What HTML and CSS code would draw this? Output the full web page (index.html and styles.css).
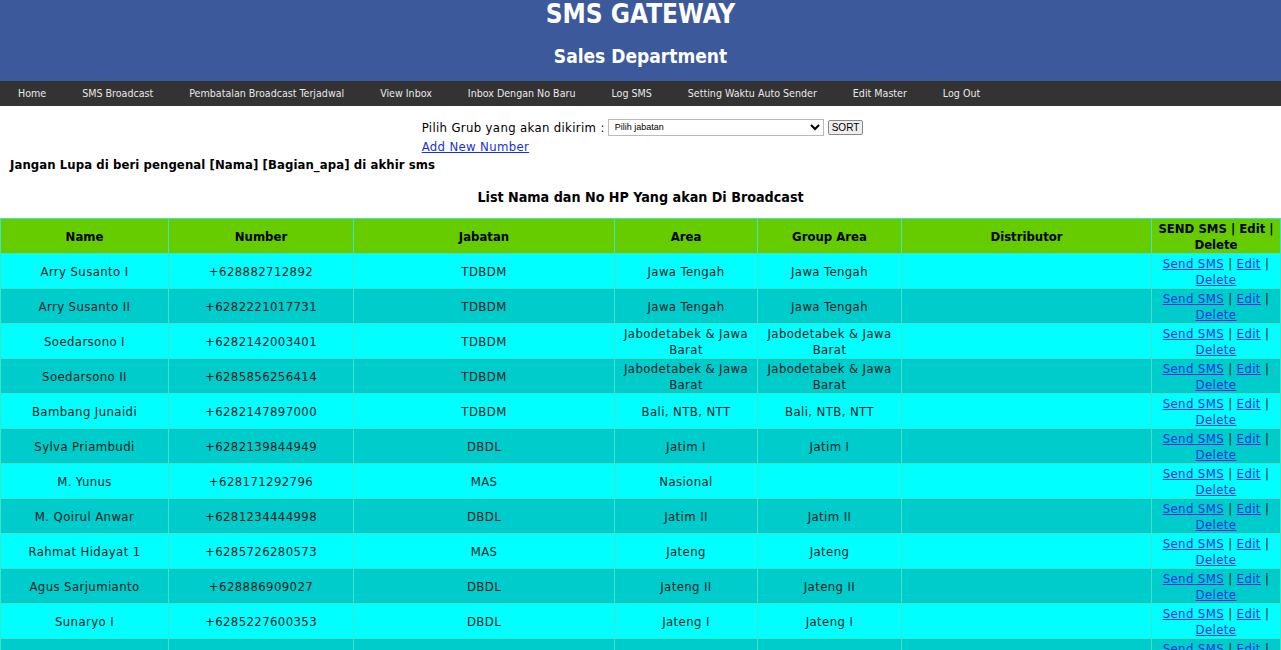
FILE: index.html
```html
<!DOCTYPE html>
<html>
<head>
<meta charset="utf-8">
<title>SMS Gateway</title>
<link rel="stylesheet" href="styles.css">
</head>
<body>
<header class="top">
  <h1 class="title">SMS GATEWAY</h1>
  <h2 class="subtitle">Sales Department</h2>
</header>
<nav class="nav">
  <a href="#">Home</a>
  <a href="#">SMS Broadcast</a>
  <a href="#">Pembatalan Broadcast Terjadwal</a>
  <a href="#">View Inbox</a>
  <a href="#">Inbox Dengan No Baru</a>
  <a href="#">Log SMS</a>
  <a href="#">Setting Waktu Auto Sender</a>
  <a href="#">Edit Master</a>
  <a href="#">Log Out</a>
</nav>
<div class="formwrap">
  <form class="pick">
    <div class="pickrow">
      <span>Pilih Grub yang akan dikirim :</span>
      <select class="sel"><option>Pilih jabatan</option></select>
      <button type="button" class="sort">SORT</button>
    </div>
    <a href="#" class="addnew">Add New Number</a>
  </form>
</div>
<p class="note">Jangan Lupa di beri pengenal [Nama] [Bagian_apa] di akhir sms</p>
<p class="listtitle">List Nama dan No HP Yang akan Di Broadcast</p>
<table class="list">
  <colgroup>
    <col class="c-name"><col class="c-num"><col class="c-jab"><col class="c-area"><col class="c-group"><col class="c-dist"><col class="c-act">
  </colgroup>
  <thead>
    <tr><th>Name</th><th>Number</th><th>Jabatan</th><th>Area</th><th>Group Area</th><th>Distributor</th><th>SEND SMS | Edit | Delete</th></tr>
  </thead>
  <tbody>
    <tr class="odd"><td>Arry Susanto I</td><td>+628882712892</td><td>TDBDM</td><td>Jawa Tengah</td><td>Jawa Tengah</td><td></td><td><a href="#">Send SMS</a> | <a href="#">Edit</a> | <a href="#">Delete</a></td></tr>
    <tr class="even"><td>Arry Susanto II</td><td>+6282221017731</td><td>TDBDM</td><td>Jawa Tengah</td><td>Jawa Tengah</td><td></td><td><a href="#">Send SMS</a> | <a href="#">Edit</a> | <a href="#">Delete</a></td></tr>
    <tr class="odd"><td>Soedarsono I</td><td>+6282142003401</td><td>TDBDM</td><td>Jabodetabek &amp; Jawa Barat</td><td>Jabodetabek &amp; Jawa Barat</td><td></td><td><a href="#">Send SMS</a> | <a href="#">Edit</a> | <a href="#">Delete</a></td></tr>
    <tr class="even"><td>Soedarsono II</td><td>+6285856256414</td><td>TDBDM</td><td>Jabodetabek &amp; Jawa Barat</td><td>Jabodetabek &amp; Jawa Barat</td><td></td><td><a href="#">Send SMS</a> | <a href="#">Edit</a> | <a href="#">Delete</a></td></tr>
    <tr class="odd"><td>Bambang Junaidi</td><td>+6282147897000</td><td>TDBDM</td><td>Bali, NTB, NTT</td><td>Bali, NTB, NTT</td><td></td><td><a href="#">Send SMS</a> | <a href="#">Edit</a> | <a href="#">Delete</a></td></tr>
    <tr class="even"><td>Sylva Priambudi</td><td>+6282139844949</td><td>DBDL</td><td>Jatim I</td><td>Jatim I</td><td></td><td><a href="#">Send SMS</a> | <a href="#">Edit</a> | <a href="#">Delete</a></td></tr>
    <tr class="odd"><td>M. Yunus</td><td>+628171292796</td><td>MAS</td><td>Nasional</td><td></td><td></td><td><a href="#">Send SMS</a> | <a href="#">Edit</a> | <a href="#">Delete</a></td></tr>
    <tr class="even"><td>M. Qoirul Anwar</td><td>+6281234444998</td><td>DBDL</td><td>Jatim II</td><td>Jatim II</td><td></td><td><a href="#">Send SMS</a> | <a href="#">Edit</a> | <a href="#">Delete</a></td></tr>
    <tr class="odd"><td>Rahmat Hidayat 1</td><td>+6285726280573</td><td>MAS</td><td>Jateng</td><td>Jateng</td><td></td><td><a href="#">Send SMS</a> | <a href="#">Edit</a> | <a href="#">Delete</a></td></tr>
    <tr class="even"><td>Agus Sarjumianto</td><td>+628886909027</td><td>DBDL</td><td>Jateng II</td><td>Jateng II</td><td></td><td><a href="#">Send SMS</a> | <a href="#">Edit</a> | <a href="#">Delete</a></td></tr>
    <tr class="odd"><td>Sunaryo I</td><td>+6285227600353</td><td>DBDL</td><td>Jateng I</td><td>Jateng I</td><td></td><td><a href="#">Send SMS</a> | <a href="#">Edit</a> | <a href="#">Delete</a></td></tr>
    <tr class="even"><td>Sunaryo II</td><td>+6285227600354</td><td>DBDL</td><td>Jateng I</td><td>Jateng I</td><td></td><td><a href="#">Send SMS</a> | <a href="#">Edit</a> | <a href="#">Delete</a></td></tr>
  </tbody>
</table>
</body>
</html>
```
FILE: styles.css
```css
html, body {
  margin: 0;
  padding: 0;
  background: #fff;
}
body {
  font-family: "DejaVu Sans Condensed", "DejaVu Sans", sans-serif;
  font-size: 13px;
  color: #000;
}
.top {
  background: #3c5a9b;
  height: 81px;
  text-align: center;
  color: #fff;
  overflow: hidden;
}
.title {
  margin: 0;
  font-size: 26px;
  line-height: 28px;
  font-weight: bold;
}
.subtitle {
  margin: 17px 0 0;
  font-size: 19px;
  line-height: 22px;
  font-weight: bold;
}
.nav {
  background: #333;
  height: 25px;
  display: flex;
  align-items: center;
}
.nav a {
  color: #e8e8e8;
  text-decoration: none;
  font-size: 10.6px;
  padding: 0 18px;
  line-height: 25px;
}
.formwrap {
  display: flex;
  justify-content: center;
  padding-top: 12px;
  padding-left: 4px;
  letter-spacing: 0.35px;
}
.pick {
  margin: 0;
  display: flex;
  flex-direction: column;
  align-items: flex-start;
}
.pickrow {
  display: flex;
  align-items: center;
  gap: 3px;
  height: 18px;
}
.sel {
  width: 216px;
  height: 17px;
  font-family: "Liberation Sans", Arial, sans-serif;
  font-size: 9px;
  letter-spacing: 0;
  padding: 0 2px;
  margin: 0;
  border: 1px solid #bbb;
  background: #fff;
}
.sort {
  font-family: "Liberation Sans", Arial, sans-serif;
  font-size: 10px;
  letter-spacing: 0;
  height: 15px;
  padding: 0 3px;
  margin: 0 0 0 1px;
  border: 1px solid #888;
  border-radius: 2px;
  background: #eee;
  color: #000;
}
.addnew {
  color: #1530e0;
  margin-top: 2px;
  line-height: 18px;
}
.note {
  margin: 0;
  padding: 0 10px;
  font-weight: bold;
  line-height: 18px;
  letter-spacing: 0.08px;
}
.listtitle {
  margin: 14px 0 0;
  text-align: center;
  font-weight: bold;
  font-size: 14.2px;
  line-height: 18px;
}
.list {
  margin-top: 12px;
  width: 100%;
  border-collapse: separate;
  border-spacing: 1px;
  background: #38e6c8;
  table-layout: fixed;
}
.c-name { width: 167px; }
.c-num { width: 184px; }
.c-jab { width: 260px; }
.c-area { width: 142px; }
.c-group { width: 143px; }
.c-dist { width: 249px; }
.c-act { width: 128px; }
.list th {
  background: #66cc00;
  font-weight: bold;
  color: #000;
  height: 33px;
  padding: 1px 2px 0;
  line-height: 16px;
}
.list td {
  text-align: center;
  color: #0c2222;
  height: 33px;
  padding: 1px 2px 0;
  line-height: 16px;
  letter-spacing: 0.4px;
}
.list tr.odd td { background: #00ffff; }
.list tr.even td { background: #00cccc; }
.list td a { color: #1530e0; }
```
